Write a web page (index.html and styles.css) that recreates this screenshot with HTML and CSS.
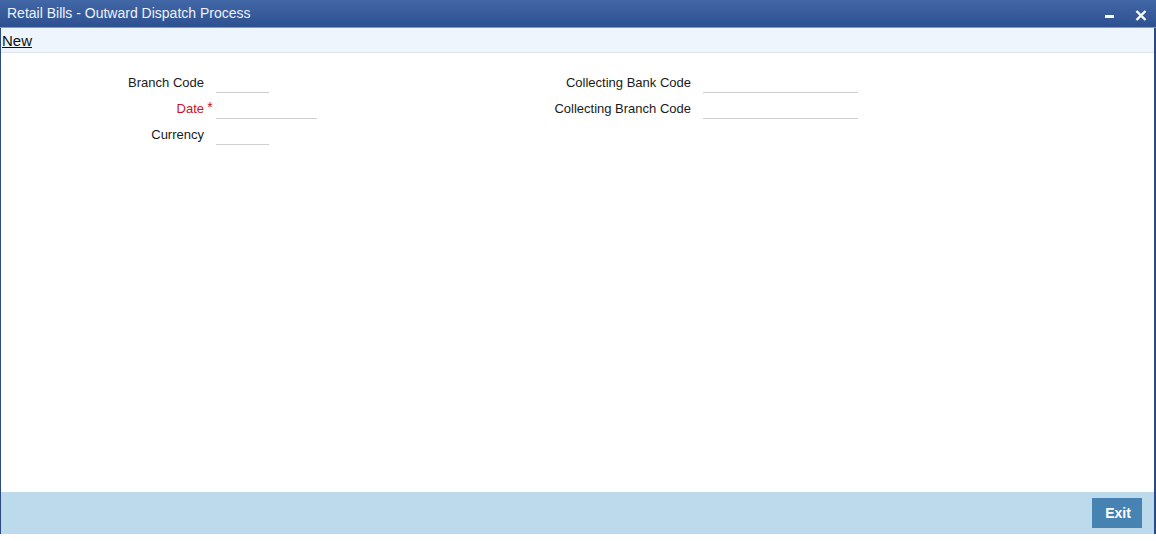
FILE: index.html
```html
<!DOCTYPE html>
<html>
<head>
<meta charset="utf-8">
<title>Retail Bills - Outward Dispatch Process</title>
<link rel="stylesheet" href="styles.css">
</head>
<body>
<div class="window">
  <div class="titlebar">
    <span class="title">Retail Bills - Outward Dispatch Process</span>
    <div class="controls">
      <span class="btn-min"></span>
      <svg class="btn-close" width="12" height="11" viewBox="0 0 12 11">
        <path d="M1.5 1 L10.5 10 M10.5 1 L1.5 10" stroke="#ffffff" stroke-width="2.4" fill="none"/>
      </svg>
    </div>
  </div>
  <div class="toolbar"><a class="new-link" href="#">New</a></div>
  <div class="content">
    <div class="group group-left">
      <label class="lbl">Branch Code</label><span class="mark"></span><span class="field w53"></span>
      <label class="lbl req">Date</label><span class="mark">*</span><span class="field w101"></span>
      <label class="lbl">Currency</label><span class="mark"></span><span class="field w53"></span>
    </div>
    <div class="group group-right">
      <label class="lbl">Collecting Bank Code</label><span class="mark"></span><span class="field w155"></span>
      <label class="lbl">Collecting Branch Code</label><span class="mark"></span><span class="field w155"></span>
    </div>
  </div>
  <div class="footer"><button class="exit">Exit</button></div>
</div>
</body>
</html>
```

FILE: styles.css
```css
html, body {
  margin: 0;
  padding: 0;
  background: #ffffff;
}
body {
  font-family: "Liberation Sans", Arial, sans-serif;
  width: 1156px;
  height: 541px;
  overflow: hidden;
}
.window {
  width: 1156px;
  height: 534px;
  box-sizing: border-box;
  border-left: 1px solid #2a4a86;
  border-right: 2px solid #2a4a86;
  display: flex;
  flex-direction: column;
}
.titlebar {
  height: 28px;
  box-sizing: border-box;
  background: linear-gradient(#4267a6, #2d5090);
  border-bottom: 1px solid #7f9dcb;
  display: flex;
  align-items: center;
  justify-content: space-between;
  margin-left: -1px;
  margin-right: -2px;
  padding-left: 7px;
}
.title {
  color: #eef2fa;
  font-size: 14px;
  line-height: 16px;
  margin-top: -2px;
}
.controls {
  display: flex;
  align-items: center;
  padding-right: 9px;
  margin-top: 4px;
}
.btn-min {
  display: block;
  width: 9px;
  height: 3px;
  background: #ffffff;
  margin-right: 21px;
  margin-top: 1px;
}
.btn-close {
  display: block;
}
.toolbar {
  height: 25px;
  box-sizing: border-box;
  background: #eef5fd;
  border-bottom: 1px solid #dde3ea;
  display: flex;
  align-items: center;
}
.new-link {
  color: #111111;
  font-size: 15px;
  text-decoration: underline;
  margin-left: 1px;
}
.content {
  flex: 1;
  display: flex;
  align-items: flex-start;
  padding-top: 15px;
}
.group {
  display: grid;
  grid-auto-rows: 26px;
  align-items: center;
}
.group-left {
  width: 540px;
  grid-template-columns: 203px 12px auto;
}
.group-right {
  grid-template-columns: 150px 12px auto;
}
.lbl {
  font-size: 13px;
  color: #1a1a1a;
  text-align: right;
  line-height: 16px;
  white-space: nowrap;
  margin-top: 4px;
}
.lbl.req {
  color: #d0101e;
}
.mark {
  color: #d0101e;
  font-size: 14px;
  text-align: center;
  line-height: 16px;
  align-self: center;
  margin-top: 0;
}
.field {
  display: block;
  height: 20px;
  box-sizing: border-box;
  border-bottom: 1px solid #cfcfcf;
  margin-top: 4px;
}
.w53 { width: 53px; }
.w101 { width: 101px; }
.w155 { width: 155px; }
.footer {
  height: 42px;
  background: #bdd9ec;
  display: flex;
  align-items: center;
  justify-content: flex-end;
  padding-right: 12px;
}
.exit {
  width: 50px;
  height: 30px;
  border: none;
  background: #4682b2;
  color: #ffffff;
  font-family: "Liberation Sans", Arial, sans-serif;
  font-size: 14px;
  font-weight: bold;
  padding: 0 0 0 2px;
  margin-top: -1px;
}
```
